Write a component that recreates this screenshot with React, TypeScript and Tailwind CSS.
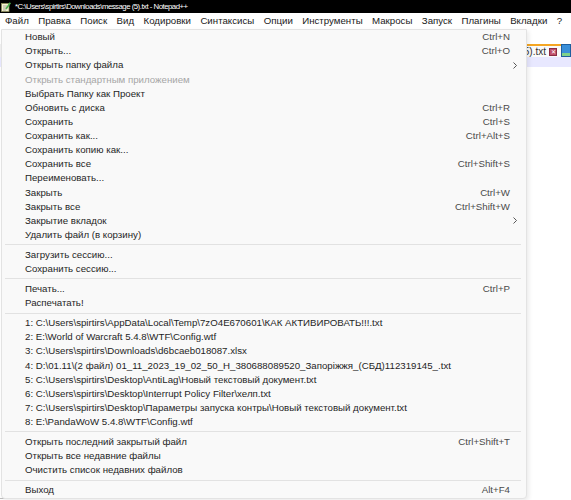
import React from "react";

type Item =
  | { sep: true }
  | { label: string; shortcut?: string; submenu?: boolean; disabled?: boolean; sep?: false };

const menuBar = ["Файл", "Правка", "Поиск", "Вид", "Кодировки", "Синтаксисы", "Опции", "Инструменты", "Макросы", "Запуск", "Плагины", "Вкладки", "?"];

const items: Item[] = [
  { label: "Новый", shortcut: "Ctrl+N" },
  { label: "Открыть...", shortcut: "Ctrl+O" },
  { label: "Открыть папку файла", submenu: true },
  { label: "Открыть стандартным приложением", disabled: true },
  { label: "Выбрать Папку как Проект" },
  { label: "Обновить с диска", shortcut: "Ctrl+R" },
  { label: "Сохранить", shortcut: "Ctrl+S" },
  { label: "Сохранить как...", shortcut: "Ctrl+Alt+S" },
  { label: "Сохранить копию как..." },
  { label: "Сохранить все", shortcut: "Ctrl+Shift+S" },
  { label: "Переименовать..." },
  { label: "Закрыть", shortcut: "Ctrl+W" },
  { label: "Закрыть все", shortcut: "Ctrl+Shift+W" },
  { label: "Закрытие вкладок", submenu: true },
  { label: "Удалить файл (в корзину)" },
  { sep: true },
  { label: "Загрузить сессию..." },
  { label: "Сохранить сессию..." },
  { sep: true },
  { label: "Печать...", shortcut: "Ctrl+P" },
  { label: "Распечатать!" },
  { sep: true },
  { label: "1: C:\\Users\\spirtirs\\AppData\\Local\\Temp\\7zO4E670601\\КАК АКТИВИРОВАТЬ!!!.txt" },
  { label: "2: E:\\World of Warcraft 5.4.8\\WTF\\Config.wtf" },
  { label: "3: C:\\Users\\spirtirs\\Downloads\\d6bcaeb018087.xlsx" },
  { label: "4: D:\\01.11\\(2 файл) 01_11_2023_19_02_50_H_380688089520_Запоріжжя_(СБД)112319145_.txt" },
  { label: "5: C:\\Users\\spirtirs\\Desktop\\AntiLag\\Новый текстовый документ.txt" },
  { label: "6: C:\\Users\\spirtirs\\Desktop\\Interrupt Policy Filter\\хелп.txt" },
  { label: "7: C:\\Users\\spirtirs\\Desktop\\Параметры запуска контры\\Новый текстовый документ.txt" },
  { label: "8: E:\\PandaWoW 5.4.8\\WTF\\Config.wtf" },
  { sep: true },
  { label: "Открыть последний закрытый файл", shortcut: "Ctrl+Shift+T" },
  { label: "Открыть все недавние файлы" },
  { label: "Очистить список недавних файлов" },
  { sep: true },
  { label: "Выход", shortcut: "Alt+F4" },
];

function NppIcon() {
  return (
    <svg width="10" height="10" viewBox="0 0 10 10">
      <rect x="0.5" y="1.5" width="7.5" height="8" fill="#f4f1d0" stroke="#8a8a5a" strokeWidth="0.8" />
      <path d="M2 4h4M2 6h4M2 8h3" stroke="#7a7a7a" strokeWidth="0.6" />
      <path d="M5 7L9.3 0.8" stroke="#4caf50" strokeWidth="1.6" />
    </svg>
  );
}

export default function App() {
  return (
    <div className="relative w-[571px] h-[500px] overflow-hidden bg-white font-['Liberation_Sans',Arial,sans-serif]">
      <div className="h-[13px] bg-black flex items-center gap-[4px] pl-[1px]">
        <NppIcon />
        <span className="text-[7.8px] leading-none text-white tracking-[-0.5px]">*C:\Users\spirtirs\Downloads\message (5).txt - Notepad++</span>
      </div>
      <div className="h-[16px] bg-white flex items-center pl-[5px] gap-[9.4px] text-[9.7px] text-[#1a1a1a]">
        {menuBar.map((m) => (
          <span key={m} className="leading-none whitespace-nowrap">{m}</span>
        ))}
      </div>

      <div className="relative">
        <div className="h-[15px] bg-white" />
        <div className="h-[13px] flex justify-end items-stretch bg-[#f0f0f0]">
          <div className="flex items-center gap-[3px] pr-[4px] border-t-2 border-[#f5a623] bg-[#fafafa]">
            <span className="text-[10px] leading-none text-[#333]">5).txt</span>
            <span className="w-[8px] h-[8px] bg-[#c0506a] border border-[#8a2c44] flex items-center justify-center text-white text-[6px] leading-none">✕</span>
          </div>
          <div className="w-[10px] bg-[#3a8fd8] border border-[#1f5f9e] flex flex-col justify-end">
            <div className="h-[3px] bg-[#7fd18a]" />
          </div>
        </div>
        <div className="h-[10px] bg-[#e8e8ff]" />
        <div className="h-[432px] bg-white" />
        <div className="absolute left-0 bottom-[0px] w-[40px] h-px bg-[#bdbdbd]" />
      </div>

      <div className="absolute left-[1px] top-[29px] w-[526px] h-[470px] bg-[#f9f9f9] border border-[#e3e3e3] rounded-b-[4px] shadow-[2px_2px_4px_rgba(0,0,0,0.08)] text-[9.7px]">
        {items.map((it, i) =>
          it.sep ? (
            <div key={i} className="h-[5.86px] flex items-center pl-[3px] pr-[5px]">
              <div className="h-px w-full bg-[#e2e2e2]" />
            </div>
          ) : (
            <div key={i} className="h-[14.14px] flex items-center pl-[23px]">
              <span className={`flex-1 leading-none whitespace-nowrap ${it.disabled ? "text-[#a6a6a6]" : "text-[#1f1f1f]"}`}>{it.label}</span>
              {it.shortcut && <span className="leading-none text-[#4a4a4a]">{it.shortcut}</span>}
              <span className="w-[16px] flex items-center">
                {it.submenu && (
                  <svg width="4" height="7" viewBox="0 0 4 7" className="ml-[3px]">
                    <path d="M0.5 0.5L3.5 3.5L0.5 6.5" fill="none" stroke="#444" strokeWidth="0.9" />
                  </svg>
                )}
              </span>
            </div>
          )
        )}
      </div>
    </div>
  );
}
